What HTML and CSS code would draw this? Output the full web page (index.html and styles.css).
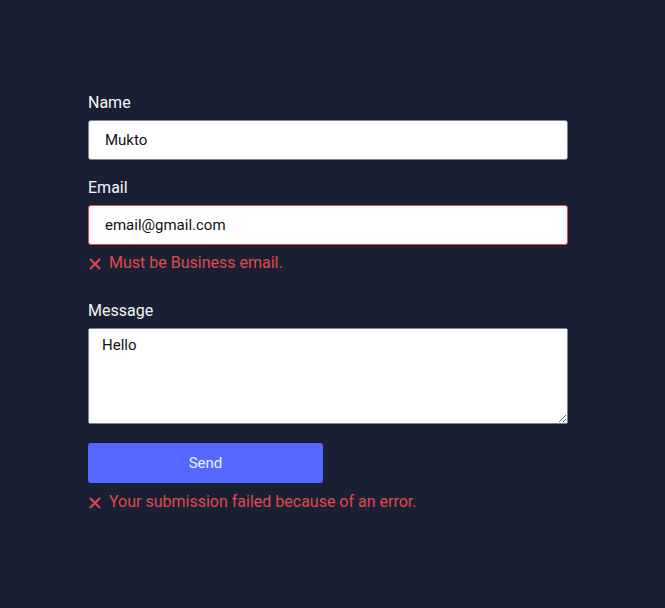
FILE: index.html
```html
<!DOCTYPE html>
<html lang="en">
<head>
<meta charset="utf-8">
<title>Contact form</title>
<link rel="stylesheet" href="styles.css">
</head>
<body>
<form class="form">
  <div class="field">
    <label class="label" for="name">Name</label>
    <input class="input" id="name" type="text" value="Mukto">
  </div>
  <div class="field">
    <label class="label" for="email">Email</label>
    <input class="input input-error" id="email" type="text" value="email@gmail.com">
    <div class="error">
      <svg class="error-icon" viewBox="0 0 12 12" width="12" height="12"><path d="M1 1L11 11M11 1L1 11" stroke="currentColor" stroke-width="2" fill="none"/></svg>
      <span>Must be Business email.</span>
    </div>
  </div>
  <div class="field field-gap">
    <label class="label" for="message">Message</label>
    <textarea class="textarea" id="message">Hello</textarea>
  </div>
  <button class="button" type="button">Send</button>
  <div class="error error-form">
    <svg class="error-icon" viewBox="0 0 12 12" width="12" height="12"><path d="M1 1L11 11M11 1L1 11" stroke="currentColor" stroke-width="2" fill="none"/></svg>
    <span>Your submission failed because of an error.</span>
  </div>
</form>
</body>
</html>
```

FILE: styles.css
```css
html, body {
  margin: 0;
  padding: 0;
  background: #1a2034;
}
body {
  font-family: Roboto, Inter, sans-serif;
  color: #ffffff;
  min-height: 608px;
}
.form {
  width: 480px;
  margin: 0;
  padding: 90px 0 0 88px;
  display: flex;
  flex-direction: column;
}
.field {
  display: flex;
  flex-direction: column;
  margin-bottom: 15px;
}
.field-gap {
  margin-top: 8px;
  margin-bottom: 19px;
}
.label {
  font-size: 16px;
  line-height: 24px;
  padding-top: 1px;
  margin-bottom: 5px;
  color: #f4f5f8;
}
.input {
  box-sizing: border-box;
  width: 480px;
  height: 40px;
  padding: 0 16px;
  border: 1px solid #7b8391;
  border-radius: 3px;
  background: #ffffff;
  color: #111111;
  font-family: Roboto, Inter, sans-serif;
  font-size: 15px;
  outline: none;
}
.input-error {
  border-color: #e0484b;
}
.textarea {
  box-sizing: border-box;
  width: 480px;
  height: 96px;
  padding: 7px 13px;
  border: 1px solid #7b8391;
  border-radius: 2px;
  background: #ffffff;
  color: #111111;
  font-family: Roboto, Inter, sans-serif;
  font-size: 15px;
  line-height: 18px;
  display: block;
  margin: 0;
  outline: none;
}
.error {
  display: flex;
  align-items: center;
  height: 24px;
  margin-top: 6px;
  color: #e0484b;
  font-size: 16px;
  line-height: 24px;
}
.error-form {
  margin-top: 7px;
}
.error-icon {
  margin-left: 1px;
  margin-right: 8px;
  flex: none;
  position: relative;
  top: 1px;
}
.button {
  width: 235px;
  height: 40px;
  border: none;
  border-radius: 3px;
  background: #5468ff;
  color: #eef0ff;
  font-family: Roboto, Inter, sans-serif;
  font-size: 15px;
  padding: 0;
  margin: 0;
}
```
